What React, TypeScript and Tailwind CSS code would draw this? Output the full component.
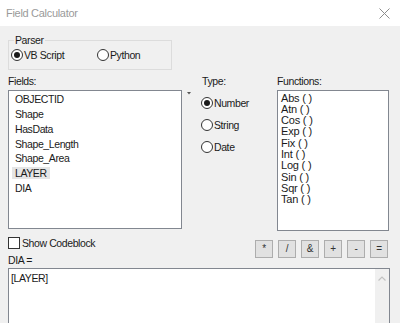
import React from "react";

const FIELDS = [
  "OBJECTID",
  "Shape",
  "HasData",
  "Shape_Length",
  "Shape_Area",
  "LAYER",
  "DIA",
];

const FUNCTIONS = [
  "Abs ( )",
  "Atn ( )",
  "Cos ( )",
  "Exp ( )",
  "Fix ( )",
  "Int ( )",
  "Log ( )",
  "Sin ( )",
  "Sqr ( )",
  "Tan ( )",
];

const OPERATORS = ["*", "/", "&", "+", "-", "="];

const Radio: React.FC<{ checked?: boolean; label: string }> = ({
  checked,
  label,
}) => (
  <div className="flex items-center">
    <span className="flex h-[12px] w-[12px] items-center justify-center rounded-full border border-[#333] bg-white">
      {checked && <span className="h-[6px] w-[6px] rounded-full bg-[#1a1a1a]" />}
    </span>
    <span className="ml-[1px] leading-[12px]">{label}</span>
  </div>
);

const App: React.FC = () => {
  return (
    <div className="h-[323px] w-[400px] overflow-hidden bg-[#f0f0f0] font-['Liberation_Sans',Arial,sans-serif] text-[10.5px] tracking-[-0.4px] text-[#1a1a1a]">
      {/* title bar */}
      <div className="flex h-[26px] items-center justify-between bg-white pl-[6px] pr-[10px]">
        <span className="text-[11px] tracking-[-0.3px] text-[#9a9a9a]">Field Calculator</span>
        <svg width="11" height="11" viewBox="0 0 11 11" className="mt-[1px]">
          <path d="M0.5 0.5 L10.5 10.5 M10.5 0.5 L0.5 10.5" stroke="#8c8c8c" strokeWidth="1" />
        </svg>
      </div>

      <div className="px-[8px]">
        {/* parser group */}
        <div className="relative mt-[14px] flex h-[30px] w-[164px] items-center border border-[#dcdcdc] pl-[2px]">
          <span className="absolute left-[5px] top-[-7px] bg-[#f0f0f0] px-[1px] leading-[12px]">
            Parser
          </span>
          <div className="w-[86px]">
            <Radio checked label="VB Script" />
          </div>
          <Radio label="Python" />
        </div>

        {/* lists */}
        <div className="mt-[4px] flex">
          <div className="w-[174px]">
            <div className="h-[14px] leading-[14px]">Fields:</div>
            <div className="mt-[2px] h-[139px] border border-[#828790] bg-white pt-[1px]">
              {FIELDS.map((f) => (
                <div key={f} className="flex h-[14.75px] items-center pl-[3px]">
                  <span
                    className={
                      "px-[3px] leading-[12px] " +
                      (f === "LAYER" ? "bg-[#e5e5e5]" : "")
                    }
                  >
                    {f}
                  </span>
                </div>
              ))}
            </div>
          </div>

          <div className="w-[19px] pl-[5px] pt-[18px]">
            <svg width="4" height="3" viewBox="0 0 4 3">
              <path d="M0 0 H4 L2 2.5 Z" fill="#555" />
            </svg>
          </div>

          <div className="w-[76px]">
            <div className="h-[14px] pl-[1px] leading-[14px]">Type:</div>
            <div className="mt-[9px] flex flex-col gap-[10px]">
              <Radio checked label="Number" />
              <Radio label="String" />
              <Radio label="Date" />
            </div>
          </div>

          <div className="w-[112px]">
            <div className="h-[14px] leading-[14px]">Functions:</div>
            <div className="mt-[2px] h-[141px] border border-[#828790] bg-white pl-[3px] pt-[1.5px] text-[11px] tracking-[-0.2px]">
              {FUNCTIONS.map((f) => (
                <div key={f} className="whitespace-pre leading-[11.3px]">
                  {f}
                </div>
              ))}
            </div>
          </div>
        </div>

        {/* codeblock + operators */}
        <div className="mt-[6px] flex justify-between">
          <div className="flex flex-col">
            <div className="flex items-center">
              <span className="h-[12px] w-[12px] border border-[#333] bg-white" />
              <span className="ml-[2px] leading-[12px]">Show Codeblock</span>
            </div>
            <div className="mt-[5px] leading-[12px]">DIA =</div>
          </div>
          <div className="mr-[4px] mt-[3px] flex gap-[5px]">
            {OPERATORS.map((op) => (
              <button
                key={op}
                className="flex h-[18px] w-[18px] items-center justify-center border border-[#adadad] bg-[#e1e1e1] text-[10px] leading-none text-[#333]"
              >
                {op}
              </button>
            ))}
          </div>
        </div>

        {/* expression */}
        <div className="mt-[2px] flex h-[70px] w-[382px] border border-[#828790] bg-white">
          <div className="flex-1 pl-[2px] pt-[3px] leading-[12px]">[LAYER]</div>
          <div className="flex w-[14px] justify-center bg-[#f0f0f0] pt-[7px]">
            <svg width="8" height="5" viewBox="0 0 8 5">
              <path d="M0.5 4.5 L4 1 L7.5 4.5" stroke="#c2c2c2" strokeWidth="1.2" fill="none" />
            </svg>
          </div>
        </div>
      </div>
    </div>
  );
};

export default App;
